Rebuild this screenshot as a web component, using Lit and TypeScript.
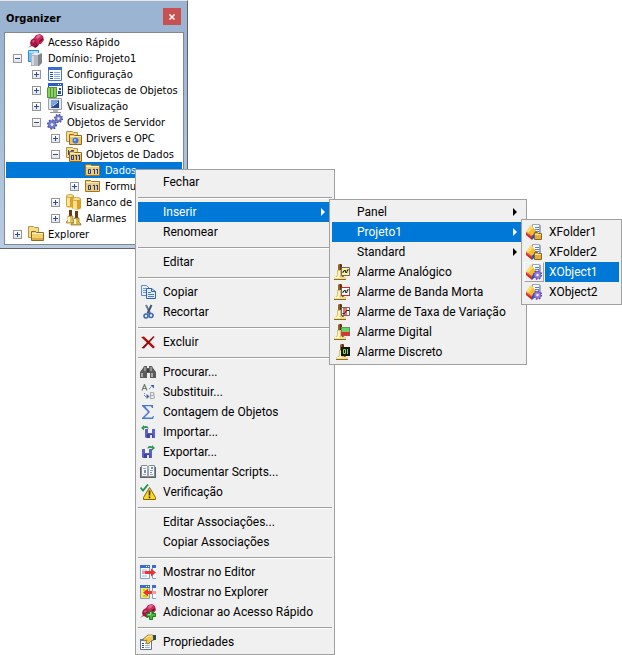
import { LitElement, html, svg, css, nothing, type TemplateResult } from "lit";
import { customElement, property } from "lit/decorators.js";

type TreeRow = { text: string; icon: string; level: number; open?: boolean; leaf?: boolean; selected?: boolean };
type MenuItem = { text?: string; icon?: string; sep?: boolean; active?: boolean; sub?: MenuItem[]; arrow?: boolean; kind?: string };

const bell = svg`
  <path d="M4 1l1-1h2l1 1v6H4z" fill="#94642c"/><path d="M6 0h1l1 1v6H6z" fill="#5a340c"/>
  <path d="M3 6h6v5l2 3H1l2-3z" fill="#dcc070"/><path d="M4 7h2v5l-1 1H3l1-2z" fill="#fff3b8"/><path d="M8 6h1v5l1 2H8z" fill="#8c6c20"/>
  <path d="M0 13h12v2H0z" fill="#f2dc90"/><path d="M0 15h12v1H0z" fill="#8a6a1c"/><path d="M1 13h5v1H1z" fill="#fff8d0"/>`;

const gear = (x: number, y: number, r: number, c: string, e: string) => svg`
  <circle cx=${x} cy=${y} r=${r - 0.2} fill="none" stroke=${e} stroke-width="2" stroke-dasharray=${`${(r * 6.2832) / 17} ${(r * 6.2832) / 17}`}/>
  <circle cx=${x} cy=${y} r=${r - 0.5} fill=${c} stroke=${e} stroke-width=".5"/>
  <circle cx=${x} cy=${y} r=${r / 3.2} fill="#f4f4fc"/>`;

const cube = svg`
  <path d="M6.500 0.500h7v12h-7z" fill="#f8faff" stroke="#98a4c0"/><path d="M14 1h1v12h-1z" fill="#a4acc4"/>
  <path d="M9 3.500h4M9 5.500h4M9 7.500h4" stroke="#5c7cc8"/>
  <path d="M5 1l5 6-4 5-6-4z" fill="#f2bc2c"/><path d="M5 1l2 3-5 5-2-1z" fill="#fbdc70"/>
  <path d="M0 8l6 4v4l-6-5z" fill="#cc2c20"/><path d="M0 8l6 4v1L1 10z" fill="#ec6450"/>
  <path d="M6 12l4-5v5l-4 4z" fill="#3050c0"/>`;

const floppy = (x: number, y: number) => svg`
  <path d=${`M${x} ${y}h10v9H${x + 1}l-1-1z`} fill="#5a60c8"/>
  <path d=${`M${x + 3} ${y}h4v4h-4z`} fill="#f2f4ff"/><path d=${`M${x + 2} ${y + 5}h6v4h-6z`} fill="#3c449c"/><path d=${`M${x + 5} ${y + 6}h2v3h-2z`} fill="#e4e8ff"/>`;

const pin = svg`
  <path d="M0 14l5-5 1.500 1.500z" fill="#787c88"/>
  <path d="M2 9l1-3 3-2 4 1 2 4-2 3-3 1-4-1z" fill="#a81444"/>
  <path d="M6 4l2-3 4-1 3 2 1 4-3 4-3 0z" fill="#c8285c"/>
  <path d="M8 3l2-2 3 0-1 2-3 2z" fill="#e46c90"/><path d="M4 7l2-1 1 1-2 2z" fill="#d85c80"/>
  <path d="M11 9l4-3v-2l-4 3zM5 12l5-1-1 2-2 1z" fill="#7c0c30"/>`;

const windows = svg`
  <path d="M0.500 1.500h9v13h-9z" fill="#fff" stroke="#7c9cd8"/><path d="M0 1h10v3H0z" fill="#3a6cd0"/>
  <path d="M12.500 1.500h4v13h-4z" fill="#fff" stroke="#7c9cd8"/><path d="M12 1h4v3h-4z" fill="#3a6cd0"/>
  <path d="M6 2h1v1H6zM8 2h1v1H8z" fill="#fff"/><path d="M2 6h5M2 12h5" stroke="#9cb0dc"/>`;

const ICONS: Record<string, TemplateResult> = {
  pin,
  domain: svg`
    <path d="M0.500 0.500h10v11h-10z" fill="#6cc0f4" stroke="#2c8cd8"/><path d="M1 1h9v2H1z" fill="#b0e0fc"/>
    <path d="M3 5l3-2h8v10l-3 3H3z" fill="#808488"/>
    <path d="M3 5h7v11H4l-1-1z" fill="#b4b8bc"/><path d="M3 5l3-2h8l-4 2z" fill="#eceef0"/><path d="M4 6h2v9H4z" fill="#d8dadc"/>`,
  config: svg`
    <path d="M1.500 1.500h13v13h-13z" fill="#fff" stroke="#4c78cc"/><path d="M1 1h14v3H1z" fill="#3a6fd0"/>
    <path d="M3 6.500h3M3 8.500h3M3 10.500h3M3 12.500h3" stroke="#2450b4"/>
    <path d="M7 6.500h6M7 8.500h6M7 10.500h6M7 12.500h6" stroke="#88a8e0"/>`,
  libs: svg`
    <path d="M1.500 1.500h14v12h-14z" fill="#fff" stroke="#244c9c"/><path d="M1 1h15v3H1z" fill="#2a5cc4"/><path d="M11 2h1v1h-1zM13 2h1v1h-1z" fill="#fff"/>
    <path d="M12 6h2v2h-2zM11 9h3v3h-3z" fill="#34509c"/>
    <path d="M0 6l1-1h9v10l-1 1H0z" fill="#4c9c30"/><path d="M1 6h2v9H1zM4 6h2v9H4zM7 6h2v9H7z" fill="#8ccc64"/>`,
  visual: svg`
    <path d="M1.500 0.500h13v11h-13z" fill="#e8e8ec" stroke="#a0a0aa"/>
    <path d="M4 2h8v8H4z" fill="#24488c"/><path d="M4 2h8l-8 8z" fill="#78a4dc"/><path d="M6 8l5-4" stroke="#d4e6fc"/>
    <path d="M6 12h5v2H6z" fill="#b4b4bc"/><path d="M3 14h11v1H3z" fill="#9090a0"/>`,
  gears: svg`${gear(5, 10.5, 4.4, "#747ccc", "#4850a4")}${gear(11.5, 4.5, 3.8, "#747ccc", "#4850a4")}`,
  drivers: svg`
    <path d="M0.500 1.500h6l1 1h4v9h-11z" fill="#f6dc8a" stroke="#b8924a"/>
    <path d="M3.500 4.500h4l1 1h7v9h-12z" fill="#ecc464" stroke="#94681c"/>
    <path d="M4 6h11v1H4z" fill="#fff0b8"/><circle cx="9.500" cy="10.500" r="3" fill="#3c74dc"/><circle cx="9" cy="10" r="1.200" fill="#98c0ff"/>`,
  dataset: svg`
    <path d="M0.500 1.500h6l1 1h4v9h-11z" fill="#f6dc8a" stroke="#b8924a"/><path d="M2 4h1v5H2zM5 4h3v1H5z" fill="#2a4e9c"/>
    <path d="M3.500 5.500h4l1 1h7v9h-12z" fill="#ecc464" stroke="#94681c"/><path d="M4 7h11v1H4z" fill="#fff0b8"/>
    <path d="M5.500 9.500h2v4h-2zM10.500 9v5M13.500 9v5M9 9.500h1M12 9.500h1" fill="none" stroke="#1c3f98"/>`,
  data: svg`
    <path d="M0.500 2.500h5l1 1h8v10h-14z" fill="#f0cf72" stroke="#a07420"/><path d="M1 4h13v1H1z" fill="#fff0b8"/>
    <path d="M1 5h13v8H1z" fill="#f0cc78"/>
    <path d="M3.500 7.500h2v4h-2zM9.500 7v5M12.500 7v5M8 7.500h1M11 7.500h1" fill="none" stroke="#1c3f98"/>`,
  bank: svg`
    <path d="M0 2v10c1 2 7 2 8 0V2z" fill="#dca428"/><path d="M1 3v9h3V3z" fill="#fce8a0"/><ellipse cx="4" cy="2" rx="3.700" ry="1.500" fill="#fae48c" stroke="#b8862a" stroke-width=".7"/>
    <path d="M6 5v9c1 2 8 2 9 0V5z" fill="#dca020"/><path d="M7 6v9h4V6z" fill="#fce08c"/><ellipse cx="10.500" cy="5" rx="4.200" ry="1.600" fill="#fae48c" stroke="#b8862a" stroke-width=".7"/>`,
  alarms: svg`
    <path d="M3 0h3v6H3z" fill="#6b3a10"/><path d="M2 6h5v4l2 2v1H0v-1l2-2z" fill="#e0c060" stroke="#8c6c20" stroke-width=".6"/><path d="M2 7h2v5H2z" fill="#fff6c4"/>
    <path d="M9 1h3v7H9z" fill="#6b3a10"/><path d="M8 8h5v4l2 2v1H5v-1l3-2z" fill="#d9b74a" stroke="#7d5c1c" stroke-width=".6"/><path d="M8 9h2v5H8z" fill="#fff6c4"/>`,
  folders: svg`
    <path d="M0.500 0.500h5l1 1h4v10h-10z" fill="#f6dc8a" stroke="#b8924a"/>
    <path d="M3.500 5.500h4l1 1h7v8h-12z" fill="#f2d070" stroke="#94681c"/><path d="M4 7h11v1H4z" fill="#fff3c8"/><path d="M4 12h11v2H4z" fill="#dcac48"/>`,
  copy: svg`
    <path d="M1.500 1.500h5l3 3v7h-8z" fill="#e8f1ff" stroke="#5c88cc"/><path d="M3 4.500h3M3 6.500h4M3 8.500h4" stroke="#6c96d8"/>
    <path d="M6.500 4.500h5l4 3v7h-9z" fill="#e4eeff" stroke="#3460b0"/><path d="M11.500 4.500v3h4" fill="none" stroke="#3460b0"/><path d="M8 8.500h3M8 10.500h6M8 12.500h6" stroke="#4a7cd0"/>`,
  cut: svg`
    <path d="M6 1l4.500 9" stroke="#6c7c94" stroke-width="2"/><path d="M11.500 1L7.500 9.500" stroke="#44546c" stroke-width="2"/>
    <ellipse cx="6" cy="12" rx="2" ry="2" fill="none" stroke="#3464bc" stroke-width="1.500"/><ellipse cx="11" cy="11.500" rx="2" ry="2" fill="none" stroke="#3464bc" stroke-width="1.500"/>`,
  del: svg`<path d="M1 3l3-0.500 11 10.500-2 1.500z" fill="#b01010"/><path d="M13.500 2l1 1L4 14.500 1.500 14z" fill="#8c0808"/>`,
  find: svg`
    <path d="M3 4l1-2h3v2h2V2h3l1 2 3 4v6h-6V9H7v5H0V8z" fill="#5c5c5c"/>
    <path d="M4 3h2v4H4zM10 3h2v4h-2z" fill="#949494"/><path d="M1 9h2v4H1zM11 9h2v4h-2z" fill="#a8a8a8"/><path d="M7 5h2v3H7z" fill="#3c3c3c"/>`,
  replace: svg`
    <path d="M2 6.500l2.500-6L7 6.500M3 4.500h3" fill="none" stroke="#6c7c74" stroke-width="1.200"/>
    <path d="M10.500 8.500v6h2.500a1.500 1.500 0 0 0 0-3h-2.500M10.500 8.500h2a1.500 1.500 0 0 1 0 3" fill="none" stroke="#a8a8ae" stroke-width="1.200"/>
    <path d="M4.500 9v3.500h3" fill="none" stroke="#6484c4" stroke-dasharray="1 1"/><path d="M6.500 10l3 2.500-3 2.500z" fill="#3c5cac"/>
    <path d="M9 5l3-3" stroke="#4a60a0" stroke-dasharray="1 1"/><path d="M10.500 1H14v3.500z" fill="#3c5cac"/>`,
  sum: svg`<path d="M2 1h11v3h-1l-1-1.800H5L10 8 4.500 13.500H12l1-1.500h1l-1 3H2v-1l6-6-6-6z" fill="#4478d8"/>`,
  import: svg`${floppy(5, 5)}<path d="M1 4l3-3v1.500c3-1 4.500 0 4.500 2.500-1-1-2.500-1.200-4.500-.5V6.500z" fill="#2c9c54"/>`,
  export: svg`${floppy(2, 5)}<path d="M15 4l-3-3v1.500c-3-1-4.500 0-4.500 2.500 1-1 2.500-1.200 4.500-.5V6.500z" fill="#2c9c54"/>`,
  book: svg`
    <path d="M0 3h16v11H0z" fill="#5c6068"/><path d="M1.500 1.500h5l1.500 1 1.500-1h5v11h-5l-1.500 1-1.500-1h-5z" fill="#f4f6fa" stroke="#808890"/>
    <path d="M8 3v11" stroke="#50545e"/><path d="M3 4.500h3M3 10.500h3M10 6.500h3M10 10.500h3" stroke="#a0a8b8"/><path d="M4 6h2v3H4zM11 3h2v2h-2zM10 8h2v1h-2z" fill="#6c90c8"/>`,
  verify: svg`
    <path d="M9.500 3.500l6 10v2h-12v-2z" fill="#fcd820" stroke="#84640c" stroke-linejoin="round"/>
    <path d="M9.500 6.500v5M9.500 12.500v1.800" stroke="#383010" stroke-width="1.600"/><path d="M0.500 3.500l2.500 3L8 0.500" fill="none" stroke="#1c9450" stroke-width="1.800"/>`,
  toEditor: svg`${windows}<path d="M3 7h8V4.500l5 4-5 4V10H3z" fill="#e83434"/><path d="M2 7h3v3H2z" fill="#f49a9a"/>`,
  toExplorer: svg`${windows}<path d="M1 4h8v10H1z" fill="#f4ec50"/><path d="M3 6h2M3 12h4" stroke="#b0a020"/><path d="M15 7H8V4.500l-5 4 5 4V10h7z" fill="#e83434"/><path d="M12 7h4v3h-4z" fill="#f49a9a"/>`,
  pinAdd: svg`${pin}<path d="M9.500 7.500h3v2h3v3h-3v3h-3v-3h-3v-3h3z" fill="#48b840" stroke="#1c7c20"/><path d="M10 8h1v3h-3v-1h2z" fill="#98e088"/>`,
  props: svg`
    <path d="M0.500 5.500h11v10h-11z" fill="#fff" stroke="#5c7494"/><path d="M0 5h6v2H0z" fill="#4c7cd0"/>
    <path d="M2 9.500h2M2 11.500h2M2 13.500h2" stroke="#404858"/><path d="M5 9.500h5M5 11.500h5M5 13.500h5" stroke="#a0b0cc"/>
    <path d="M3 5l5-4h4l2 1v4l-3 1-3 3-2-1 1-3-3 1z" fill="#f0c850" stroke="#8c6c20" stroke-width=".8"/><path d="M6 4l3-2h3" fill="none" stroke="#fff0a8"/><path d="M13 1h3v5h-3z" fill="#284c5c"/>`,
  aAnalog: svg`${bell}<path d="M7.500 3.500h8v8h-8z" fill="#fdf59a" stroke="#686868"/><path d="M9 9V7.500h1v-1h1.500v2H13v-2h1V5" fill="none" stroke="#222"/>`,
  aDead: svg`${bell}<path d="M7.500 3.500h8v8h-8z" fill="#fff" stroke="#686868"/><path d="M7 3.500h9M7 11.500h9" stroke="#e02020"/><path d="M9 9V7.500h1v-1h1.500v2H13v-2h1V5" fill="none" stroke="#222"/>`,
  aRate: svg`${bell}<path d="M7.500 3.500h8v8h-8z" fill="#fff" stroke="#686868"/><path d="M9 4h4v7H9z" fill="#f46868"/><path d="M8.500 9.500h2l2-3h2.500" fill="none" stroke="#222"/>`,
  aDigital: svg`${bell}<path d="M7 3h9v5H7z" fill="#62d862"/><path d="M7 8h9v4H7z" fill="#f02828"/><path d="M7.500 3.500h8v8h-8z" fill="none" stroke="#707070" stroke-width=".7"/>`,
  aDiscrete: svg`<g transform="translate(2 0)">${bell}</g><path d="M7 3h9v9H7z" fill="#101810"/><path d="M9.500 5.500h2v4h-2zM13.500 5v5" fill="none" stroke="#98d43c"/>`,
  xfolder: svg`${cube}<path d="M8.500 9.500v-1h3l1 1h3v6h-7z" fill="#e0b044" stroke="#8c681c"/><path d="M9 10h6v1H9z" fill="#fbe39a"/>`,
  xobject: svg`${cube}${gear(11.5, 11, 4, "#947cdc", "#6044b8")}`,
};

const icon = (name?: string) =>
  name ? html`<svg class="icon" viewBox="0 0 16 16" aria-hidden="true">${ICONS[name]}</svg>` : nothing;

const TREE: TreeRow[] = [
  { text: "Acesso Rápido", icon: "pin", level: 0, leaf: true },
  { text: "Domínio: Projeto1", icon: "domain", level: 0, open: true },
  { text: "Configuração", icon: "config", level: 1 },
  { text: "Bibliotecas de Objetos", icon: "libs", level: 1 },
  { text: "Visualização", icon: "visual", level: 1 },
  { text: "Objetos de Servidor", icon: "gears", level: 1, open: true },
  { text: "Drivers e OPC", icon: "drivers", level: 2 },
  { text: "Objetos de Dados", icon: "dataset", level: 2, open: true },
  { text: "Dados", icon: "data", level: 3, leaf: true, selected: true },
  { text: "Formulas", icon: "data", level: 3 },
  { text: "Banco de Dados", icon: "bank", level: 2 },
  { text: "Alarmes", icon: "alarms", level: 2 },
  { text: "Explorer", icon: "folders", level: 0 },
];

const OBJECTS: MenuItem[] = [
  { text: "XFolder1", icon: "xfolder" },
  { text: "XFolder2", icon: "xfolder" },
  { text: "XObject1", icon: "xobject", active: true },
  { text: "XObject2", icon: "xobject" },
];

const INSERT: MenuItem[] = [
  { text: "Panel", arrow: true },
  { text: "Projeto1", arrow: true, active: true, sub: OBJECTS, kind: "objects" },
  { text: "Standard", arrow: true },
  { text: "Alarme Analógico", icon: "aAnalog" },
  { text: "Alarme de Banda Morta", icon: "aDead" },
  { text: "Alarme de Taxa de Variação", icon: "aRate" },
  { text: "Alarme Digital", icon: "aDigital" },
  { text: "Alarme Discreto", icon: "aDiscrete" },
];

const MENU: MenuItem[] = [
  { text: "Fechar" },
  { sep: true },
  { text: "Inserir", arrow: true, active: true, sub: INSERT, kind: "insert" },
  { text: "Renomear" },
  { sep: true },
  { text: "Editar" },
  { sep: true },
  { text: "Copiar", icon: "copy" },
  { text: "Recortar", icon: "cut" },
  { sep: true },
  { text: "Excluir", icon: "del" },
  { sep: true },
  { text: "Procurar...", icon: "find" },
  { text: "Substituir...", icon: "replace" },
  { text: "Contagem de Objetos", icon: "sum" },
  { text: "Importar...", icon: "import" },
  { text: "Exportar...", icon: "export" },
  { text: "Documentar Scripts...", icon: "book" },
  { text: "Verificação", icon: "verify" },
  { sep: true },
  { text: "Editar Associações..." },
  { text: "Copiar Associações" },
  { sep: true },
  { text: "Mostrar no Editor", icon: "toEditor" },
  { text: "Mostrar no Explorer", icon: "toExplorer" },
  { text: "Adicionar ao Acesso Rápido", icon: "pinAdd" },
  { sep: true },
  { text: "Propriedades", icon: "props" },
];

@customElement("popup-menu")
class PopupMenu extends LitElement {
  @property({ attribute: false }) items: MenuItem[] = [];

  static styles = css`
    :host { display: block; box-sizing: border-box; padding: 2px; border: 1px solid #a0a0a0; background: #f0f0f0; }
    .list { list-style: none; margin: 0; padding: 0; }
    .entry { position: relative; }
    .sep { height: 1px; margin: 5px 0 3px; background: #a0a0a0; border-bottom: 1px solid #fff; }
    .item {
      display: flex; align-items: center; width: 100%; height: 20px; padding: 0; border: 0;
      background: none; color: #000; font: 12px/20px Roboto, sans-serif; text-align: left; white-space: nowrap;
    }
    .slot { display: flex; align-items: center; justify-content: center; box-sizing: border-box; flex: none; width: 20px; height: 20px; }
    .icon { display: block; width: 16px; height: 16px; }
    .label { flex: 1; display: flex; align-items: center; height: 20px; padding-left: 4px; margin-left: 1px; }
    .text { flex: 1; }
    .arrow { flex: none; width: 4px; height: 8px; margin-right: 7px; fill: currentColor; }
    .active.plain, .active .label { background: #0078d7; color: #fff; }
    .active .raised { border: 1px solid; border-color: #fff #a0a0a0 #a0a0a0 #fff; }
    .sub { position: absolute; left: calc(100% - 3px); top: -3px; z-index: 1; }
    .insert { min-width: 198px; }
    .objects { min-width: 101px; }
  `;

  render() {
    return html`<ul class="list" role="menu">
      ${this.items.map((m) =>
        m.sep
          ? html`<li class="sep" role="separator"></li>`
          : html`<li class="entry" role="none">
              <button type="button" role="menuitem" class="item ${m.active ? "active" : ""} ${m.icon ? "" : "plain"}">
                <span class="slot ${m.icon ? "raised" : ""}">${icon(m.icon)}</span>
                <span class="label"><span class="text">${m.text}</span>
                  ${m.arrow ? html`<svg class="arrow" viewBox="0 0 4 8" aria-hidden="true"><path d="M0 0l4 4-4 4z"/></svg>` : nothing}
                </span>
              </button>
              ${m.sub ? html`<popup-menu class="sub ${m.kind}" .items=${m.sub}></popup-menu>` : nothing}
            </li>`
      )}
    </ul>`;
  }
}

@customElement("organizer-panel")
class OrganizerPanel extends LitElement {
  static styles = css`
    :host {
      display: block; box-sizing: border-box; padding: 0 3px 3px 4px; background: linear-gradient(#9ab4d1 32px, #b8cce4);
      border-right: 1px solid #646464; border-bottom: 1px solid #646464; border-top: 1px solid #e8e8e8;
      font: 11px/16px "DejaVu Sans Condensed", "DejaVu Sans", sans-serif; color: #000;
    }
    .bar { display: flex; align-items: center; justify-content: space-between; height: 31px; padding: 0 3px 0 2px; }
    .title { margin: 0; padding-top: 4px; font-size: 11px; font-weight: bold; }
    .close { display: flex; align-items: center; justify-content: center; width: 18px; height: 17px; padding: 0; border: 0; background: #c75050; }
    .cross { width: 6px; height: 6px; stroke: #fff; stroke-width: 1.5; }
    .tree { list-style: none; margin: 0; padding: 1px 1px 2px; border: 1px solid #828790; background: #fff; }
    .row { display: flex; align-items: center; height: 16px; overflow: hidden; white-space: nowrap; }
    .selected { background: #0078d7; color: #fff; }
    .l0 { padding-left: 7px; } .l1 { padding-left: 26px; } .l2 { padding-left: 45px; } .l3 { padding-left: 64px; }
    .toggle { flex: none; box-sizing: border-box; width: 9px; height: 9px; padding: 0; border: 1px solid #969696; background: linear-gradient(#fff, #e4e4e4); display: flex; }
    .mark { width: 7px; height: 7px; stroke: #2a4ea0; }
    .blank { flex: none; width: 9px; }
    .icon { flex: none; width: 16px; height: 16px; margin: 0 4px 0 6px; }
    .name { padding-top: 1px; }
  `;

  render() {
    return html`
      <header class="bar">
        <h1 class="title">Organizer</h1>
        <button type="button" class="close" aria-label="Close"><svg class="cross" viewBox="0 0 6 6"><path d="M0.500 0.500l5 5M5.500 0.500l-5 5"/></svg></button>
      </header>
      <ul class="tree" role="tree">
        ${TREE.map(
          (r) => html`<li class="row l${r.level} ${r.selected ? "selected" : ""}" role="treeitem">
            ${r.leaf
              ? html`<span class="blank"></span>`
              : html`<button type="button" class="toggle" aria-label=${r.text}><svg class="mark" viewBox="0 0 7 7"><path d=${r.open ? "M1 3.5h5" : "M1 3.5h5M3.5 1v5"}/></svg></button>`}
            ${icon(r.icon)}<span class="name">${r.text}</span>
          </li>`
        )}
      </ul>
    `;
  }
}

@customElement("app-root")
class AppRoot extends LitElement {
  static styles = css`
    :host { display: block; position: relative; min-height: 100vh; background: #fff; }
    .panel { width: 188px; }
    .context { position: absolute; left: 135px; top: 169px; min-width: 200px; }
  `;

  render() {
    return html`<organizer-panel class="panel"></organizer-panel>
      <popup-menu class="context" .items=${MENU}></popup-menu>`;
  }
}
